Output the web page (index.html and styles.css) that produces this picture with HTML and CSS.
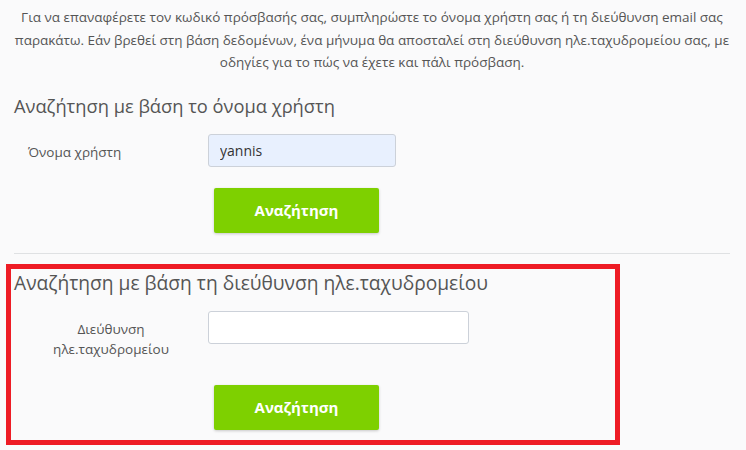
FILE: index.html
```html
<!DOCTYPE html>
<html>
<head>
<meta charset="utf-8">
<link rel="stylesheet" href="styles.css">
</head>
<body>
<div id="page">
<p class="intro">Για να επαναφέρετε τον κωδικό πρόσβασής σας, συμπληρώστε το όνομα χρήστη σας ή τη διεύθυνση email σας παρακάτω. Εάν βρεθεί στη βάση δεδομένων, ένα μήνυμα θα αποσταλεί στη διεύθυνση ηλε.ταχυδρομείου σας, με οδηγίες για το πώς να έχετε και πάλι πρόσβαση.</p>

<div class="section first">
<h2>Αναζήτηση με βάση το όνομα χρήστη</h2>
<div class="row">
<label class="lbl" for="username">Όνομα χρήστη</label>
<input type="text" id="username" class="field autofill" value="yannis" />
</div>
<div class="btnRow">
<button type="button" class="btnSearch">Αναζήτηση</button>
</div>
</div>

<div class="section second">
<h2>Αναζήτηση με βάση τη διεύθυνση ηλε.ταχυδρομείου</h2>
<div class="row">
<label class="lbl centered" for="email">Διεύθυνση<br />ηλε.ταχυδρομείου</label>
<input type="text" id="email" class="field wide" value="" />
</div>
<div class="btnRow">
<button type="button" class="btnSearch">Αναζήτηση</button>
</div>
<div class="highlight"></div>
</div>
</div>
</body>
</html>
```

FILE: styles.css
```css
body
{
	margin: 0;
	background-color: #fafafb;
	font-family: "Open Sans", Arial, sans-serif;
	color: #555;
}
#page
{
	padding: 6px 14px 0 14px;
	width: 716px;
}
.intro
{
	margin: 0;
	font-size: 13.5px;
	line-height: 22.5px;
	text-align: center;
}
.section
{
	position: relative;
}
.first
{
	padding: 19px 0 20px 0;
	border-bottom: 1px solid #dfe1e3;
}
.second
{
	padding: 16px 0 19px 0;
}
h2
{
	margin: 0;
	font-size: 18.3px;
	font-weight: normal;
	line-height: 26px;
	color: #555;
}
.second h2
{
	font-size: 19.2px;
}
.row
{
	display: grid;
	grid-template-columns: 194px 1fr;
	align-items: start;
	margin-top: 15px;
}
.lbl
{
	font-size: 13.5px;
	line-height: 20px;
	padding: 8px 0 0 14px;
	color: #555;
}
.lbl.centered
{
	padding-left: 0;
	text-align: center;
	width: 180px;
	margin-left: 7px;
}
.field
{
	box-sizing: border-box;
	height: 33px;
	width: 188px;
	margin: 0;
	border: 1px solid #ccd1d9;
	border-radius: 3px;
	background-color: #fff;
	font-family: "Open Sans", Arial, sans-serif;
	font-size: 14px;
	color: #333;
	padding: 0 11px;
}
.autofill
{
	background-color: #e8f0fe;
}
.wide
{
	width: 261px;
}
.btnRow
{
	padding-left: 200px;
	margin-top: 21px;
}
.second .btnRow
{
	margin-top: 26px;
}
.btnSearch
{
	display: block;
	width: 165px;
	height: 45px;
	border: 0;
	border-radius: 2px;
	background-color: #7ed000;
	color: #fff;
	font-family: "Open Sans", Arial, sans-serif;
	font-size: 15px;
	font-weight: bold;
	box-shadow: 0 1px 3px rgba(0,0,0,.2);
}
.highlight
{
	position: absolute;
	left: -8px;
	top: 10px;
	width: 604px;
	height: 171px;
	border: 5px solid #ee1c25;
	pointer-events: none;
}
```
